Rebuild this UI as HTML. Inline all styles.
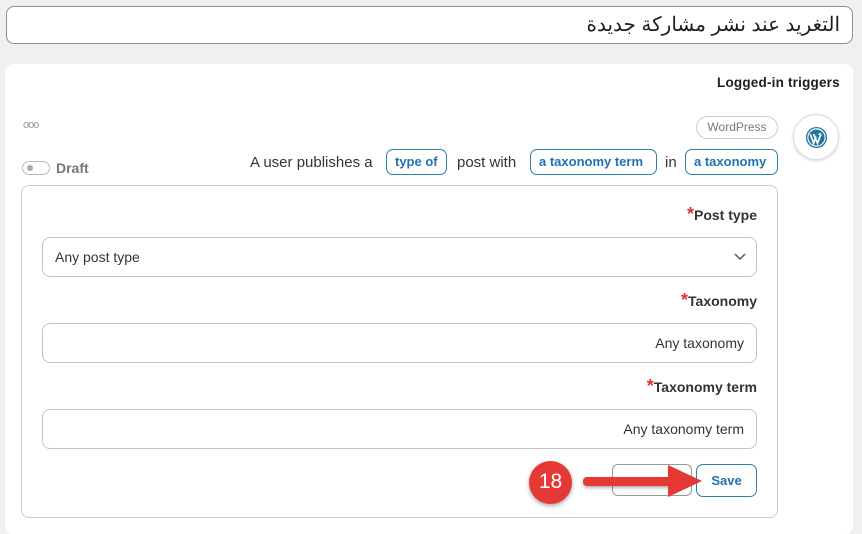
<!DOCTYPE html>
<html><head><meta charset="utf-8"><style>
*{box-sizing:border-box;margin:0;padding:0}
body{width:862px;height:527px;background:#f0f0f1;font-family:"Liberation Sans","Noto Sans CJK SC",sans-serif;position:relative;overflow:hidden;color:#1e1e1e}
.a{position:absolute}
.title{left:6px;top:6px;width:847px;height:38px;background:#fff;border:1px solid #8c8f94;border-radius:8px;direction:rtl;padding:0 12px;font-size:20px;line-height:36px;color:#1e1e1e;font-family:"Liberation Sans","Noto Sans CJK SC",sans-serif}
.card{left:5px;top:64px;width:848px;height:470px;background:#fff;border-radius:8px}
.pill{border:1px solid #2e7fa8;border-radius:7px;color:#2271b1;font-size:13px;font-weight:bold;height:26px;line-height:24px;padding:0 8px}
.lbl{font-size:14px;font-weight:bold;color:#333}
.lbl b{color:#e03030;font-size:18px}
.inp{left:42px;width:715px;height:40px;border:1px solid #c3c4c7;border-radius:8px;background:#fff;font-size:14px;color:#333;line-height:38px;padding:0 12px}
</style></head><body>
<div class="a title">التغريد عند نشر مشاركة جديدة</div>
<div class="a card"></div>
<div class="a" style="left:717px;top:75px;font-size:13.5px;font-weight:bold;letter-spacing:0.2px">Logged-in triggers</div>
<div class="a" style="left:23px;top:119px;font-size:11px;color:#999;letter-spacing:-1px">ooo</div>
<div class="a" style="left:22px;top:161px;width:28px;height:14px;border:1px solid #bbb;border-radius:8px"><div class="a" style="left:4px;top:3px;width:6px;height:6px;border-radius:50%;background:#aaa"></div></div>
<div class="a" style="left:56px;top:160px;font-size:14px;font-weight:bold;color:#777">Draft</div>
<div class="a" style="left:250px;top:154px;font-size:15px;color:#333">A user publishes a</div>
<div class="a pill" style="left:386px;top:149px">type of</div>
<div class="a" style="left:457px;top:154px;font-size:15px;color:#333">post with</div>
<div class="a pill" style="left:530px;top:149px;width:127px">a taxonomy term</div>
<div class="a" style="left:665px;top:154px;font-size:15px;color:#333">in</div>
<div class="a pill" style="left:685px;top:149px;width:93px">a taxonomy</div>
<div class="a" style="left:696px;top:116px;width:82px;height:23px;border:1px solid #ccc;border-radius:12px;font-size:12px;line-height:21px;color:#777;text-align:center">WordPress</div>
<div class="a" style="left:793px;top:114px;width:46px;height:46px;border-radius:50%;border:1px solid #ddd;background:#fff;box-shadow:0 1px 3px rgba(0,0,0,.15)">
<svg class="a" style="left:11px;top:11px" width="23" height="23" viewBox="0 0 24 24"><circle cx="12" cy="12" r="11" fill="#21759b"/><circle cx="12" cy="12" r="9" fill="none" stroke="#fff" stroke-width="1.2"/><path d="M5.5 8.5 L9 18 L11.5 11 M9 8.5 L13 18 L16.5 9 M14 8.5h3" stroke="#fff" stroke-width="1.8" fill="none"/></svg></div>
<div class="a" style="left:21px;top:185px;width:757px;height:333px;border:1px solid #ccc;border-radius:8px"></div>
<div class="a lbl" style="right:105px;top:204px"><b>*</b>Post type</div>
<div class="a inp" style="top:237px">Any post type<svg class="a" style="right:10px;top:15px" width="12" height="8"><path d="M1 1l5 5 5-5" stroke="#666" stroke-width="1.6" fill="none"/></svg></div>
<div class="a lbl" style="right:105px;top:290px"><b>*</b>Taxonomy</div>
<div class="a inp" style="top:323px;text-align:right">Any taxonomy</div>
<div class="a lbl" style="right:105px;top:376px"><b>*</b>Taxonomy term</div>
<div class="a inp" style="top:409px;text-align:right">Any taxonomy term</div>
<div class="a" style="left:612px;top:464px;width:80px;height:32px;border:1px solid #999;border-radius:6px"></div>
<div class="a" style="left:696px;top:464px;width:61px;height:33px;border:1px solid #2e7fa8;border-radius:7px;color:#2271b1;font-size:13px;font-weight:bold;text-align:center;line-height:31px">Save</div>
<div class="a" style="left:583px;top:477px;width:95px;height:9px;background:#e53935;border-radius:4px;box-shadow:0 2px 3px rgba(0,0,0,.3)"></div>
<svg class="a" style="left:668px;top:465px" width="34" height="32"><path d="M0 0 L34 16 L0 32 Z" fill="#e53935"/></svg>
<div class="a" style="left:529px;top:461px;width:43px;height:43px;border-radius:50%;background:#e53935;color:#fff;font-size:21px;text-align:center;line-height:42px;box-shadow:0 2px 4px rgba(0,0,0,.35)">18</div>
</body></html>
